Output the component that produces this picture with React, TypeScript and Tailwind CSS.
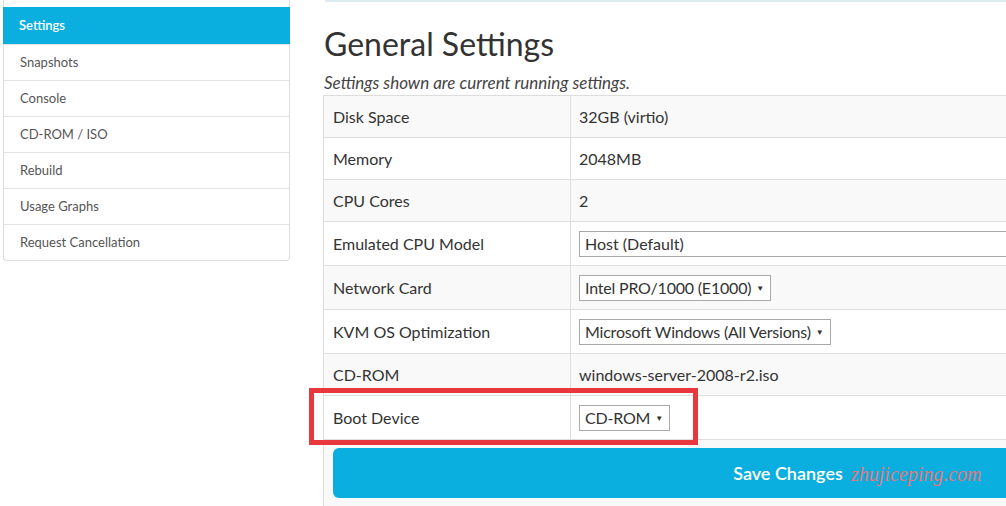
import React from 'react';

const menu = ['Settings', 'Snapshots', 'Console', 'CD-ROM / ISO', 'Rebuild', 'Usage Graphs', 'Request Cancellation'];

const Select = ({ label }: { label: string }) => (
    <div className="inline-flex h-[26px] border border-[#a9a9a9] bg-white items-center pl-[5px] pr-[6px] text-[16px] text-[#333] whitespace-nowrap">
        <span className="tracking-[-0.2px]">{label}</span>
        <span className="ml-[5px] text-[8px] leading-none text-[#333]">▼</span>
    </div>
);

type Row = { label: string; value: React.ReactNode; tall?: boolean };

const rows: Row[] = [
    { label: 'Disk Space', value: '32GB (virtio)' },
    { label: 'Memory', value: '2048MB' },
    { label: 'CPU Cores', value: '2' },
    {
        label: 'Emulated CPU Model',
        tall: true,
        value: (
            <div className="h-[26px] border border-[#a9a9a9] bg-white flex items-center px-[5px] w-[700px]">Host (Default)</div>
        ),
    },
    { label: 'Network Card', tall: true, value: <Select label="Intel PRO/1000 (E1000)" /> },
    { label: 'KVM OS Optimization', tall: true, value: <Select label="Microsoft Windows (All Versions)" /> },
    { label: 'CD-ROM', value: 'windows-server-2008-r2.iso' },
    { label: 'Boot Device', tall: true, value: <Select label="CD-ROM" /> },
];

export default function App() {
    return (
        <div className="relative w-[1006px] h-[506px] overflow-hidden bg-white font-['Lato',sans-serif] text-[#333]">
            <div className="flex">
                {/* Sidebar */}
                <div className="ml-[3px] w-[287px] shrink-0">
                    <div className="border border-t-0 border-[#ddd] rounded-b-[4px] pt-[7px] bg-white">
                        {menu.map((item, i) => (
                            <div
                                key={item}
                                className={`h-[36px] flex items-center px-[16px] text-[13px] ${
                                    i === 0
                                        ? 'bg-[#0aafe0] text-white font-semibold -mx-px h-[37px]'
                                        : 'border-t border-[#e3e3e3] text-[#555]'
                                }`}
                            >
                                {item}
                            </div>
                        ))}
                    </div>
                </div>

                {/* Main */}
                <div className="ml-[33px] w-[930px] shrink-0">
                    <div className="ml-[2px] h-[2px] bg-[#dcedf2]" />
                    <h1 className="mt-[22px] text-[32px] leading-[40px] text-[#333] ml-[1px]">General Settings</h1>
                    <p className="mt-[8px] italic text-[17px] leading-[21px] text-[#444] ml-[1px] mb-[2px]">
                        Settings shown are current running settings.
                    </p>
                    <table className="border-collapse table-fixed w-full text-[16px]">
                        <colgroup>
                            <col className="w-[247px]" />
                            <col />
                        </colgroup>
                        <tbody>
                            {rows.map((r, i) => (
                                <tr key={r.label} className={i % 2 === 0 ? 'bg-[#f9f9f9]' : 'bg-white'}>
                                    <td className={`border border-[#ddd] pl-[9px] ${r.tall ? 'h-[44px]' : 'h-[42px]'}`}>{r.label}</td>
                                    <td className="border border-[#ddd] pl-[8px]">{r.value}</td>
                                </tr>
                            ))}
                            <tr className="bg-[#f9f9f9]">
                                <td colSpan={2} className="border border-[#ddd] px-[9px] pt-[8px] pb-[20px]">
                                    <button className="w-full h-[50px] rounded-[6px] bg-[#0aafe0] text-white text-[18px] font-semibold">
                                        Save Changes
                                    </button>
                                </td>
                            </tr>
                        </tbody>
                    </table>
                </div>
            </div>

            {/* Annotation overlay */}
            <div className="absolute left-[309px] top-[388px] w-[389px] h-[57px] border-[5px] border-[#e8383d]" />
            <div className="absolute left-[851px] top-[459px] italic text-[20px] text-[#e0777a] font-['Liberation_Serif',serif]">
                zhujiceping.com
            </div>
        </div>
    );
}
